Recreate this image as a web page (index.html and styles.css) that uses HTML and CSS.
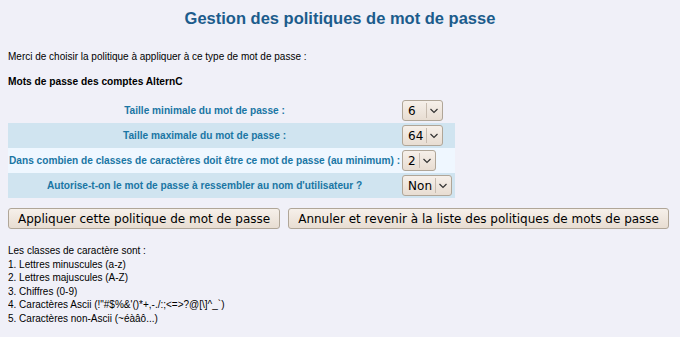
FILE: index.html
```html
<!DOCTYPE html>
<html lang="fr">
<head>
    <meta charset="UTF-8">
    <title>Gestion des politiques de mot de passe</title>
    <link rel="stylesheet" href="styles.css">
</head>
<body>
    <h3>Gestion des politiques de mot de passe</h3>
    <p class="intro">Merci de choisir la politique à appliquer à ce type de mot de passe :</p>
    <p class="intro"><b>Mots de passe des comptes AlternC</b></p>

    <form id="policy">
        <table class="tedit">
            <tr>
                <th>Taille minimale du mot de passe :</th>
                <td><select name="minsize" class="w-num"><option>6</option></select></td>
            </tr>
            <tr class="lst1">
                <th>Taille maximale du mot de passe :</th>
                <td><select name="maxsize" class="w-num"><option>64</option></select></td>
            </tr>
            <tr class="lst2">
                <th>Dans combien de classes de caractères doit être ce mot de passe (au minimum) :</th>
                <td><select name="classcount" class="w-cls"><option>2</option></select></td>
            </tr>
            <tr class="lst1">
                <th>Autorise-t-on le mot de passe à ressembler au nom d'utilisateur ?</th>
                <td><select name="allowlogin" class="w-yn"><option>Non</option><option>Oui</option></select></td>
            </tr>
        </table>

        <div class="actions">
            <button type="submit" class="inb">Appliquer cette politique de mot de passe</button>
            <button type="button" class="inb">Annuler et revenir à la liste des politiques de mots de passe</button>
        </div>
    </form>

    <p class="classes">
        Les classes de caractère sont :<br>
        1. Lettres minuscules (a-z)<br>
        2. Lettres majuscules (A-Z)<br>
        3. Chiffres (0-9)<br>
        4. Caractères Ascii (!"#$%&amp;'()*+,-./:;&lt;=&gt;?@[\]^_`)<br>
        5. Caractères non-Ascii (~éàâô...)
    </p>
</body>
</html>
```

FILE: styles.css
```css
body {
    margin:8px;
    background-color:#f0f0f8;
    font-family:'Liberation Sans', Arial, sans-serif;
    font-size:10px;
    color:#000;
}
h3 {
    margin:0 0 23px;
    line-height:20px;
    text-align:center;
    font-size:16.5px;
    color:#1c5c8c;
}
b {
    font-size:10.2px;
}
.intro {
    margin:0 0 13px;
    line-height:12px;
}
.tedit {
    border-collapse:collapse;
    margin-top:-3px;
}
.tedit th {
    height:25px;
    padding:0 1px;
    text-align:center;
    color:#1a76a4;
    font-size:10.15px;
}
.tedit td {
    padding:0 3px 0 1px;
}
.lst1 {
    background-color:#d0e4f0;
}
.lst2 {
    background-color:#eff7ff;
}
select, .inb {
    font-family:'DejaVu Sans', Verdana, sans-serif;
    font-size:12px;
    color:#000;
    background:linear-gradient(#f6f0ea, #e8ddd2);
    border:1px solid #b0a698;
    border-radius:3px;
}
select {
    appearance:none;
    -webkit-appearance:none;
    display:block;
    height:21px;
    padding:0 16px 0 5px;
    background:url("data:image/svg+xml,%3Csvg xmlns='http://www.w3.org/2000/svg' width='16' height='19'%3E%3Cpath d='M0.5 2V17' stroke='%23c8bcb0'/%3E%3Cpath d='M4.5 8l3.5 3.5L11.5 8' fill='none' stroke='%23333' stroke-width='1.2'/%3E%3C/svg%3E") no-repeat right 0 center, linear-gradient(#f6f0ea, #e8ddd2);
}
.w-num {
    width:41px;
}
.w-cls {
    width:34px;
}
.w-yn {
    width:50px;
}
.actions {
    display:flex;
    gap:8px;
    margin-top:10px;
}
.inb {
    height:21px;
    padding:0 9px;
    white-space:nowrap;
}
.classes {
    margin:15px 0 0;
    line-height:13.5px;
}
```
